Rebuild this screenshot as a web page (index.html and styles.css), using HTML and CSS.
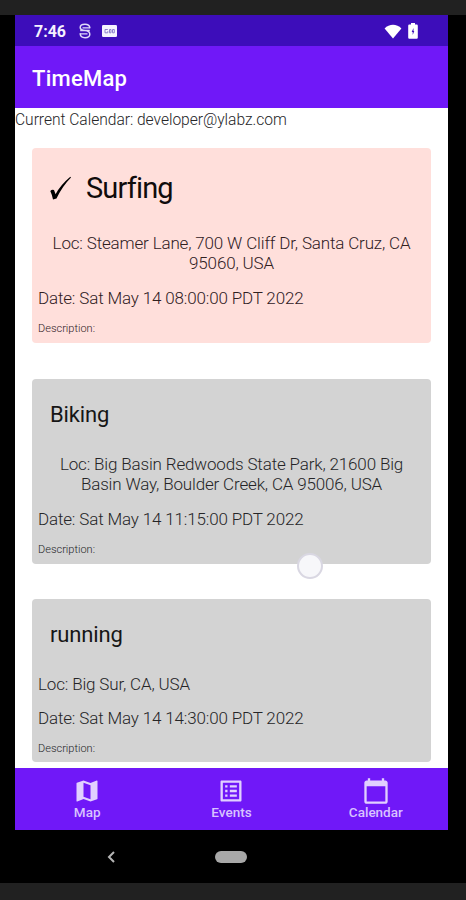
FILE: index.html
```html
<!DOCTYPE html>
<html lang="en">
<head>
<meta charset="utf-8">
<title>TimeMap</title>
<link rel="stylesheet" href="styles.css">
</head>
<body>
<div class="phone">
  <div class="status">
    <span class="clock">7:46</span>
    <svg class="s-icon" viewBox="0 0 12 16" width="12" height="16" fill="none" stroke="#e0d9fa" stroke-width="1.500"><path d="M10.800 5.300V4.500C10.500 2.200 8.500 1.300 6 1.300C3.500 1.300 1.200 2.300 1.200 4.500S3 7.200 6 7.500S10.800 9 10.800 11.300S8.500 14.700 6 14.700S1.500 13.600 1.200 11V10.300M1.200 7.600H10.800"/><path stroke-width="1.200" d="M3.500 4.800H10.800M1.200 10.800H8.500"/></svg>
    <svg class="box-icon" viewBox="0 0 15 12" width="15" height="12"><rect width="15" height="12" rx="1.300" fill="#f6f3ff"/><path d="M5.800 4.500H3V7.800H5.800V6.200M7.500 4.500V7.800H9V4.500ZM10.500 4.500H12.300V7.800H10.500Z" fill="none" stroke="#8d80cc" stroke-width="1"/></svg>
    <span class="grow"></span>
    <svg class="wifi" viewBox="0 0 18 15" width="18" height="15"><path d="M.6 4.500C5.200-.4 12.800-.4 17.400 4.500L9 14.600Z" fill="#fff"/></svg>
    <svg class="battery" viewBox="0 0 10 16" width="10" height="16"><path d="M3 0H7V1.500H8.700Q9.800 1.500 9.800 2.700V14.500Q9.800 15.700 8.700 15.700H1.300Q.2 15.700.2 14.500V2.700Q.2 1.500 1.300 1.500H3Z" fill="#fff"/><path d="M5.500 5L3.700 9H4.700V12L6.300 8H5.500Z" fill="#3d0dba"/></svg>
  </div>
  <header class="appbar">TimeMap</header>
  <main class="content">
    <p class="account">Current Calendar: developer@ylabz.com</p>
    <section class="card current">
      <h2><svg class="check" viewBox="0 0 22 24" width="22" height="24"><path d="M.3 15Q2 13 4 14L5.600 18.300Q10 9.500 20.300.8L21 1.500Q12.500 10 6.500 22.500L3 23.600Q2 18.500.3 15Z" fill="#000"/></svg><span>Surfing</span></h2>
      <p class="loc">Loc: Steamer Lane, 700 W Cliff Dr, Santa Cruz, CA<br>95060, USA</p>
      <p class="date">Date: Sat May 14 08:00:00 PDT 2022</p>
      <p class="desc">Description:</p>
    </section>
    <section class="card">
      <h2>Biking</h2>
      <p class="loc">Loc: Big Basin Redwoods State Park, 21600 Big<br>Basin Way, Boulder Creek, CA 95006, USA</p>
      <p class="date">Date: Sat May 14 11:15:00 PDT 2022</p>
      <p class="desc">Description:</p>
      <span class="touch"></span>
    </section>
    <section class="card">
      <h2>running</h2>
      <p class="loc short">Loc: Big Sur, CA, USA</p>
      <p class="date">Date: Sat May 14 14:30:00 PDT 2022</p>
      <p class="desc">Description:</p>
    </section>
  </main>
  <nav class="tabs">
    <div class="tab"><svg viewBox="0 0 24 24" width="28" height="28"><path d="M20.500 3l-.16.03L15 5.100 9 3 3.360 4.900c-.21.07-.36.25-.36.480V20.500c0 .28.22.5.5.5l.16-.03L9 18.900l6 2.100 5.640-1.900c.21-.07.36-.25.36-.48V3.500c0-.28-.22-.5-.5-.5zM15 19l-6-2.110V5l6 2.110V19z"/></svg><span>Map</span></div>
    <div class="tab"><svg viewBox="0 0 24 24" width="28" height="28"><path d="M19 5v14H5V5h14m1.100-2H3.900c-.5 0-.9.4-.9.900v16.200c0 .4.400.9.900.9h16.200c.4 0 .9-.5.900-.9V3.900c0-.5-.5-.9-.9-.9zM11 7h6v2h-6V7zm0 4h6v2h-6v-2zm0 4h6v2h-6zM7 7h2v2H7zm0 4h2v2H7zm0 4h2v2H7z"/></svg><span>Events</span></div>
    <div class="tab"><svg viewBox="0 0 24 24" width="28" height="28"><path d="M20 3h-1V1h-2v2H7V1H5v2H4c-1.100 0-2 .9-2 2v16c0 1.100.9 2 2 2h16c1.100 0 2-.9 2-2V5c0-1.100-.9-2-2-2zm0 18H4V8h16v13z"/></svg><span>Calendar</span></div>
  </nav>
  <div class="system">
    <svg viewBox="0 0 8 12" width="8" height="12" fill="none" stroke="#b4b4b4" stroke-width="2"><path d="M7 1L2 6L7 11"/></svg>
    <span class="home"></span>
    <span></span>
  </div>
</div>
</body>
</html>
```
FILE: styles.css
```css
* { box-sizing: border-box; }
body { margin: 0; height: 900px; padding: 15px 0 17px; background: #212121; font-family: Roboto, sans-serif; overflow: hidden; }
h2, p { margin: 0; font-weight: 400; }
.phone { height: 868px; padding: 0 18px 0 15px; background: #000; display: flex; flex-direction: column; }
.status { height: 31px; background: #3d0dba; display: flex; align-items: center; padding: 1px 30px 0 19px; color: #f5f1ff; }
.clock { font-size: 16px; font-weight: 700; width: 45px; }
.box-icon { margin-left: 11px; }
.grow { flex: 1; }
.battery { margin-left: 6px; }
.appbar { height: 62px; background: #7018f8; color: #fff; font-size: 22px; font-weight: 500; line-height: 66px; padding-left: 17px; letter-spacing: .25px; }
.content { height: 660px; background: #fff; overflow: hidden; color: #252527; }
.account { font-size: 15.6px; font-weight: 300; line-height: 18px; padding-top: 3px; margin-bottom: 19px; white-space: nowrap; letter-spacing: -.03px; }
.card { position: relative; margin: 0 17px 36px; height: 185px; padding: 18px 6px 0; border-radius: 4px; background: #d3d3d3; }
.card + .card { margin-bottom: 35px; }
.card:last-child { height: 163px; }
.current { height: 195px; background: #ffdfdb; color: #30201f; }
.card h2 { font-size: 22px; line-height: 35px; padding-left: 12px; color: #161616; display: flex; align-items: center; letter-spacing: -.15px; }
.current h2 { font-size: 29px; line-height: 44px; gap: 14px; color: #100c0c; letter-spacing: -.85px; }
.card p { white-space: nowrap; font-weight: 300; letter-spacing: -.16px; }
.loc { font-size: 17px; line-height: 20px; margin-top: 22px; text-align: center; }
.current .loc { margin-top: 23px; }
.card .short { text-align: left; }
.date { font-size: 17px; line-height: 20px; margin-top: 15px; }
.short + .date { margin-top: 14px; }
.card .desc { font-size: 11px; line-height: 14px; margin-top: 14px; letter-spacing: 0; }
.touch { position: absolute; left: 265px; top: 174px; width: 26px; height: 26px; border-radius: 50%; border: 2px solid #d9d7e2; background: #f7f7fa; }
.tabs { height: 62px; background: #7018f8; display: grid; grid-template-columns: repeat(3, 1fr); color: #d8c3ff; }
.tab { display: flex; flex-direction: column; align-items: center; padding-top: 9px; font-size: 13.5px; font-weight: 500; line-height: 15px; }
.tab svg { fill: #e1d0ff; }
.system { flex: 1; display: grid; grid-template-columns: repeat(3, 1fr); align-items: center; justify-items: center; }
.system svg { margin-left: 47px; }
.home { width: 32px; height: 12px; border-radius: 6px; background: #a8a8a8; }
```
